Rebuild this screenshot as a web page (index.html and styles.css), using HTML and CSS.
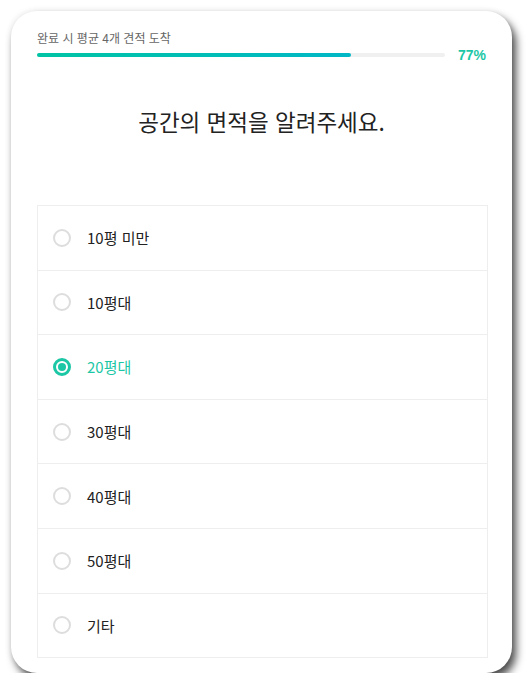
FILE: index.html
```html
<!DOCTYPE html>
<html lang="ko">
  <head>
    <meta charset="UTF-8" />
    <meta name="viewport" content="width=device-width, initial-scale=1" />
    <title>견적 요청</title>
    <link rel="stylesheet" href="styles.css">
  </head>
  <body>
    <div class="card">
      <div class="progress">
        <div class="progress-label">완료 시 평균 4개 견적 도착</div>
        <div class="progress-row">
          <div class="progress-track">
            <div class="progress-fill" style="width: 77%"></div>
          </div>
          <span class="progress-percent">77%</span>
        </div>
      </div>

      <h1 class="question">공간의 면적을 알려주세요.</h1>

      <ul class="options">
        <li class="option"><span class="radio"></span>10평 미만</li>
        <li class="option"><span class="radio"></span>10평대</li>
        <li class="option selected"><span class="radio"></span>20평대</li>
        <li class="option"><span class="radio"></span>30평대</li>
        <li class="option"><span class="radio"></span>40평대</li>
        <li class="option"><span class="radio"></span>50평대</li>
        <li class="option"><span class="radio"></span>기타</li>
      </ul>
    </div>
  </body>
</html>
```

FILE: styles.css
```css
body {
  margin: 0;
  background: #ffffff;
  font-family: "Noto Sans CJK KR", "Noto Sans", sans-serif;
  color: #222;
}

.card {
  margin: 11px 0 0 11px;
  width: 501px;
  height: 662px;
  box-sizing: border-box;
  background: #fff;
  border-radius: 26px;
  box-shadow: 4px 6px 8px rgba(0, 0, 0, 0.7), -1px -1px 6px rgba(0, 0, 0, 0.06);
  padding: 18px 26px 0 26px;
}

.progress-label {
  font-size: 12px;
  color: #666;
  line-height: 18px;
}

.progress-row {
  display: flex;
  align-items: center;
  margin-top: 0;
}

.progress-track {
  width: 410px;
  height: 4px;
  background: #f0f0f0;
  border-radius: 2px;
}

.progress-fill {
  height: 100%;
  border-radius: 2px;
  background: linear-gradient(90deg, #00c4a4, #00b7c6);
}

.progress-percent {
  margin-left: 13px;
  font-family: "Liberation Sans", Arial, sans-serif;
  font-size: 14px;
  font-weight: bold;
  color: #1cc7a6;
}

.question {
  margin: 43px 0 0;
  text-align: center;
  font-size: 22.5px;
  font-weight: normal;
  color: #222;
  line-height: 30px;
}

.options {
  list-style: none;
  margin: 69px 0 0;
  padding: 0;
  width: 449px;
  border: 1px solid #eeeeee;
}

.option {
  display: flex;
  align-items: center;
  height: 63.6px;
  font-size: 15px;
  color: #222;
  border-top: 1px solid #eeeeee;
}

.option:first-child {
  border-top: none;
}

.radio {
  width: 14px;
  height: 14px;
  border: 2px solid #dddddd;
  border-radius: 50%;
  margin: 0 16px 0 15px;
  box-sizing: content-box;
  display: flex;
  align-items: center;
  justify-content: center;
}

.option.selected {
  color: #1cc7a6;
}

.option.selected .radio {
  border: 3px solid #1cc7a6;
  width: 12px;
  height: 12px;
}

.option.selected .radio::after {
  content: "";
  width: 8px;
  height: 8px;
  border-radius: 50%;
  background: #1cc7a6;
}
```
